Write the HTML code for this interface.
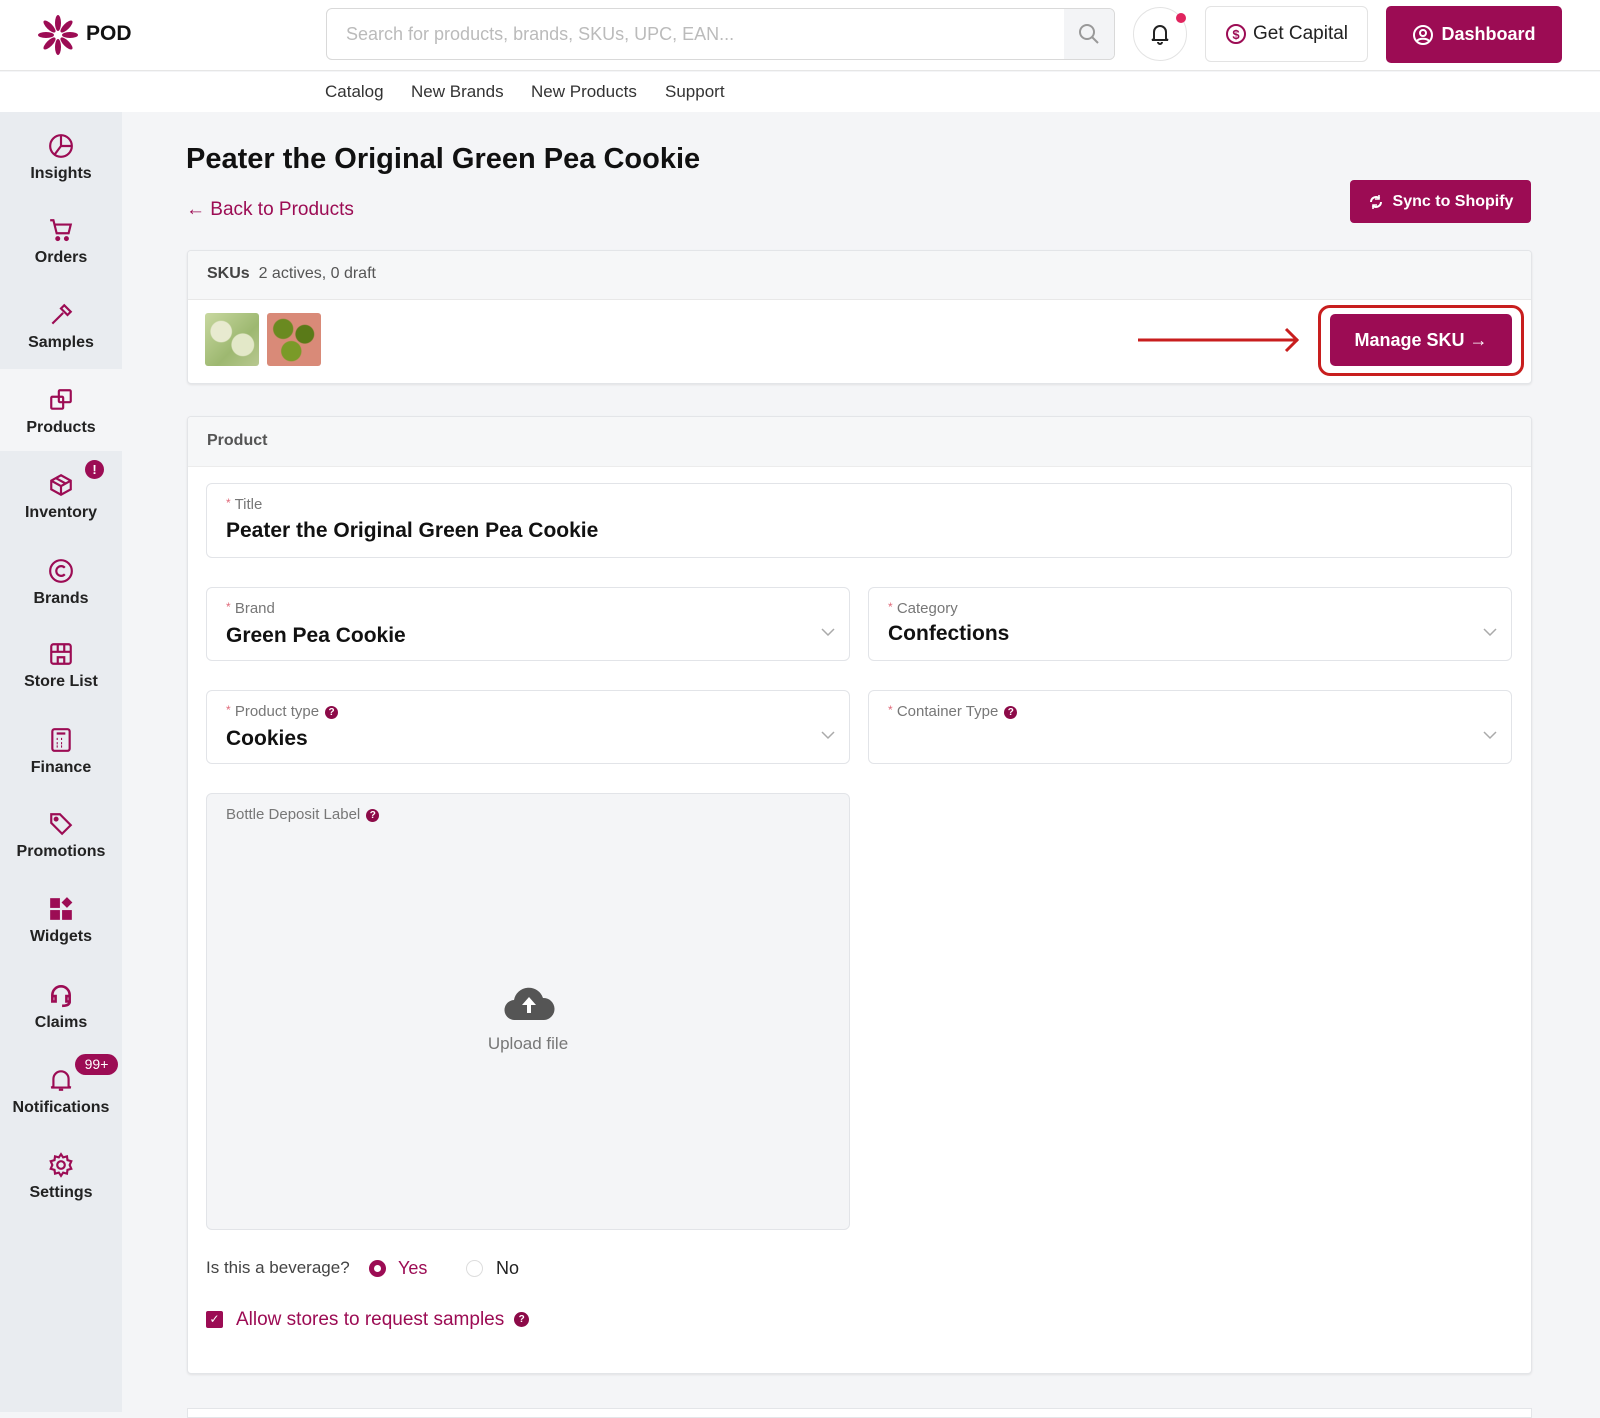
<!DOCTYPE html>
<html><head><meta charset="utf-8"><style>
*{box-sizing:border-box;margin:0;padding:0}
body{width:1600px;height:1412px;overflow:hidden;background:#f4f5f7;font-family:"Liberation Sans",sans-serif;position:relative;color:#111}
.a{position:absolute}
.hdr{left:0;top:0;width:1600px;height:71px;background:#fff;border-bottom:1px solid #e6e6e6}
.nav{left:0;top:72px;width:1600px;height:40px;background:#fff}
.nav span{position:absolute;top:10px;font-size:17px;color:#333}
.side{left:0;top:112px;width:122px;height:1300px;background:#e9ecf0}
.si{position:absolute;left:0;width:122px;text-align:center}
.si svg{display:block;margin:0 auto}
.si div{font-size:16px;font-weight:bold;color:#222;margin-top:6px}
.btn{background:#9c0c54;color:#fff;border-radius:4px;font-weight:bold;display:flex;align-items:center;justify-content:center}
.card{background:#fff;border:1px solid #e3e5e8;border-radius:4px;box-shadow:0 1px 2px rgba(0,0,0,.08)}
.fld{background:#fff;border:1px solid #e2e4e8;border-radius:6px}
.lbl{position:absolute;left:19px;top:12px;font-size:15px;color:#777}
.lbl b{color:#e06a7a;font-weight:normal;font-size:12px;vertical-align:top}
.val{position:absolute;left:19px;top:36px;font-size:21px;font-weight:bold;color:#111}
.chev{position:absolute;right:14px;top:40px}
.q{display:inline-block;width:13px;height:13px;border-radius:50%;background:#8c0a48;color:#fff;font-size:10px;text-align:center;line-height:13px;font-weight:bold;vertical-align:middle;margin-left:6px}
</style></head><body>
<div class="a hdr"></div>
<svg class="a" style="left:36px;top:13px" width="44" height="44" viewBox="0 0 44 44">
<g fill="#9c0c54" transform="translate(22,22)">
<ellipse rx="3" ry="8" cy="-12"/><ellipse rx="3" ry="8" cy="-12" transform="rotate(45)"/><ellipse rx="3" ry="8" cy="-12" transform="rotate(90)"/><ellipse rx="3" ry="8" cy="-12" transform="rotate(135)"/><ellipse rx="3" ry="8" cy="-12" transform="rotate(180)"/><ellipse rx="3" ry="8" cy="-12" transform="rotate(225)"/><ellipse rx="3" ry="8" cy="-12" transform="rotate(270)"/><ellipse rx="3" ry="8" cy="-12" transform="rotate(315)"/>
</g></svg>
<div class="a" style="left:86px;top:22px;font-size:21px;font-weight:bold;color:#111">POD</div>
<div class="a" style="left:326px;top:8px;width:789px;height:52px;border:1px solid #d9d9d9;border-radius:6px;background:#fff;overflow:hidden">
<div style="position:absolute;left:19px;top:15px;font-size:18px;color:#bbb">Search for products, brands, SKUs, UPC, EAN...</div>
<div style="position:absolute;right:0;top:0;width:50px;height:52px;background:#f3f4f6"></div>
<svg style="position:absolute;right:14px;top:14px" width="22" height="22" viewBox="0 0 22 22" fill="none" stroke="#999" stroke-width="2"><circle cx="9" cy="9" r="7"/><path d="M14 14l6 6"/></svg>
</div>
<div class="a" style="left:1133px;top:7px;width:54px;height:54px;border:1px solid #e3e3e3;border-radius:50%;background:#fff"></div>
<svg class="a" style="left:1150px;top:23px" width="20" height="22" viewBox="0 0 20 22" fill="none" stroke="#222" stroke-width="2"><path d="M4 16V9a6 6 0 0 1 12 0v7l2 1H2z"/><path d="M8 19a2 2 0 0 0 4 0"/></svg>
<div class="a" style="left:1176px;top:13px;width:10px;height:10px;border-radius:50%;background:#e0245e"></div>
<div class="a" style="left:1205px;top:6px;width:163px;height:56px;border:1px solid #e3e3e3;border-radius:6px;background:#fff;display:flex;align-items:center;justify-content:center;font-size:19px;color:#222">
<svg width="22" height="22" viewBox="0 0 22 22" style="margin-right:6px"><circle cx="11" cy="11" r="9" fill="none" stroke="#9c0c54" stroke-width="2"/><text x="11" y="16" text-anchor="middle" font-size="13" font-weight="bold" fill="#9c0c54" font-family="Liberation Sans">$</text></svg>Get Capital</div>
<div class="a btn" style="left:1386px;top:6px;width:176px;height:57px;font-size:18px;border-radius:5px">
<svg width="22" height="22" viewBox="0 0 22 22" fill="none" stroke="#fff" stroke-width="2" style="margin-right:7px"><circle cx="11" cy="11" r="9"/><circle cx="11" cy="9" r="3"/><path d="M5 17c2-3 10-3 12 0"/></svg>Dashboard</div>
<div class="a nav"><span style="left:325px">Catalog</span><span style="left:411px">New Brands</span><span style="left:531px">New Products</span><span style="left:665px">Support</span></div>

<div class="a side"></div>
<div class="a" style="left:0;top:369px;width:122px;height:82px;background:#f4f5f7"></div>
<div class="si" style="top:133px"><svg width="26" height="26" viewBox="0 0 24 24" fill="none" stroke="#9c0c54" stroke-width="2"><circle cx="12" cy="12" r="10"/><path d="M12 2v10h10M12 12l-6 8"/></svg><div>Insights</div></div>
<div class="si" style="top:217px"><svg width="26" height="26" viewBox="0 0 24 24" fill="none" stroke="#9c0c54" stroke-width="2"><path d="M2 3h3l3 12h11l2-8H6"/><circle cx="9" cy="20" r="1.3" fill="#9c0c54"/><circle cx="17" cy="20" r="1.3" fill="#9c0c54"/></svg><div>Orders</div></div>
<div class="si" style="top:302px"><svg width="26" height="26" viewBox="0 0 24 24" fill="none" stroke="#9c0c54" stroke-width="2"><path d="M4 20l10-10M12 6l6 6M15 3l6 6-3 3-6-6z"/></svg><div>Samples</div></div>
<div class="si" style="top:387px"><svg width="26" height="26" viewBox="0 0 24 24" fill="none" stroke="#9c0c54" stroke-width="2"><rect x="3" y="9" width="11" height="11" rx="1"/><rect x="10" y="3" width="11" height="11" rx="1"/></svg><div>Products</div></div>
<div class="si" style="top:472px"><svg width="26" height="26" viewBox="0 0 24 24" fill="none" stroke="#9c0c54" stroke-width="2"><path d="M12 3l9 5v8l-9 5-9-5V8zM3 8l9 5 9-5M12 13v8M7 5.5l9 5"/></svg><div>Inventory</div></div>
<div class="a" style="left:85px;top:460px;width:19px;height:19px;border-radius:50%;background:#9c0c54;color:#fff;font-size:13px;font-weight:bold;text-align:center;line-height:19px">!</div>
<div class="si" style="top:558px"><svg width="26" height="26" viewBox="0 0 24 24" fill="none" stroke="#9c0c54" stroke-width="2"><circle cx="12" cy="12" r="10"/><path d="M15.5 9a4.5 4.5 0 1 0 0 6"/></svg><div>Brands</div></div>
<div class="si" style="top:641px"><svg width="26" height="26" viewBox="0 0 24 24" fill="none" stroke="#9c0c54" stroke-width="2"><rect x="3" y="3" width="18" height="18" rx="2"/><path d="M3 10h18M9 3v7M15 3v7M9 21v-6h6v6"/></svg><div>Store List</div></div>
<div class="si" style="top:727px"><svg width="26" height="26" viewBox="0 0 24 24" fill="none" stroke="#9c0c54" stroke-width="2"><rect x="4" y="2" width="16" height="20" rx="2"/><path d="M8 6h8M8 11h1M12 11h1M8 15h1M12 15h1M8 18h1M12 18h1"/></svg><div>Finance</div></div>
<div class="si" style="top:811px"><svg width="26" height="26" viewBox="0 0 24 24" fill="none" stroke="#9c0c54" stroke-width="2"><path d="M3 3h8l10 10-8 8L3 11z"/><circle cx="7.5" cy="7.5" r="1.3" fill="#9c0c54"/></svg><div>Promotions</div></div>
<div class="si" style="top:896px"><svg width="26" height="26" viewBox="0 0 24 24" fill="#9c0c54"><rect x="2" y="2" width="9" height="9"/><rect x="2" y="13" width="9" height="9"/><rect x="13" y="13" width="9" height="9"/><path d="M17.5 1l5 5-5 5-5-5z"/></svg><div>Widgets</div></div>
<div class="si" style="top:982px"><svg width="26" height="26" viewBox="0 0 24 24" fill="none" stroke="#9c0c54" stroke-width="2.4"><path d="M4 16v-4a8 8 0 0 1 16 0v4M4 13h3v5H4zM17 13h3v5h-3zM20 18c0 3-3 4-7 4"/></svg><div>Claims</div></div>
<div class="si" style="top:1067px"><svg width="26" height="26" viewBox="0 0 24 24" fill="none" stroke="#9c0c54" stroke-width="2"><path d="M5 18V11a7 7 0 0 1 14 0v7l2 1H3z"/><path d="M10 21h4"/></svg><div>Notifications</div></div>
<div class="a" style="left:75px;top:1054px;width:43px;height:21px;border-radius:11px;background:#9c0c54;color:#fff;font-size:14px;text-align:center;line-height:21px">99+</div>
<div class="si" style="top:1152px"><svg width="26" height="26" viewBox="0 0 24 24" fill="none" stroke="#9c0c54" stroke-width="2"><circle cx="12" cy="12" r="3.5"/><path d="M12 2l2 3 3.5-1 .5 3.5 3.5 1-1.5 3.5 1.5 3.5-3.5 1-.5 3.5-3.5-1-2 3-2-3-3.5 1-.5-3.5-3.5-1L4 12 2.5 8.5 6 7.5 6.5 4 10 5z"/></svg><div>Settings</div></div>

<div class="a" style="left:186px;top:143px;font-size:29px;font-weight:bold;color:#111">Peater the Original Green Pea Cookie</div>
<div class="a" style="left:186px;top:199px;font-size:19px;color:#9c0c54">← Back to Products</div>
<div class="a btn" style="left:1350px;top:180px;width:181px;height:43px;font-size:16px">
<svg width="16" height="16" viewBox="0 0 16 16" fill="none" stroke="#fff" stroke-width="2" style="margin-right:9px"><path d="M3 8a5 5 0 0 1 8.5-3.5M13 8a5 5 0 0 1-8.5 3.5"/><path d="M11 1v4h-4M5 15v-4h4" stroke-width="1.6"/></svg>Sync to Shopify</div>

<div class="a card" style="left:187px;top:250px;width:1345px;height:134px;overflow:hidden">
<div style="height:49px;background:#f6f7f8;border-bottom:1px solid #e8e8e8;padding:14px 19px;font-size:16px;color:#555"><b style="color:#444">SKUs</b>&nbsp; 2 actives, 0 draft</div>
<div style="position:absolute;left:17px;top:62px;width:54px;height:53px;border-radius:3px;background:radial-gradient(circle at 30% 35%,#e8ead0 0 20%,transparent 22%),radial-gradient(circle at 70% 60%,#e3e8c8 0 22%,transparent 24%),linear-gradient(135deg,#c8d8a0,#9db870 60%,#b8c890)"></div>
<div style="position:absolute;left:79px;top:62px;width:54px;height:53px;border-radius:3px;background:radial-gradient(circle at 30% 30%,#6a8a20 0 18%,transparent 20%),radial-gradient(circle at 70% 40%,#5a7a18 0 18%,transparent 20%),radial-gradient(circle at 45% 72%,#7a9a28 0 20%,transparent 22%),#d98a78"></div>
</div>
<svg class="a" style="left:1136px;top:326px" width="166" height="28" viewBox="0 0 166 28" fill="none" stroke="#c81e1e" stroke-width="3"><path d="M2 14h160M150 3l11 11-11 11"/></svg>
<div class="a" style="left:1318px;top:305px;width:206px;height:71px;border:3px solid #c81e1e;border-radius:12px"></div>
<div class="a btn" style="left:1330px;top:314px;width:182px;height:52px;font-size:18px;border-radius:5px">Manage SKU →</div>

<div class="a card" style="left:187px;top:416px;width:1345px;height:958px;overflow:hidden">
<div style="height:50px;background:#f6f7f8;border-bottom:1px solid #ececec;padding:15px 19px;font-size:16px;font-weight:bold;color:#555">Product</div>
</div>
<div class="a fld" style="left:206px;top:483px;width:1306px;height:75px"><div class="lbl"><b>*</b> Title</div><div class="val" style="top:35px">Peater the Original Green Pea Cookie</div></div>
<div class="a fld" style="left:206px;top:587px;width:644px;height:74px"><div class="lbl"><b>*</b> Brand</div><div class="val">Green Pea Cookie</div><svg class="chev" width="14" height="9" viewBox="0 0 14 9" fill="none" stroke="#aaa" stroke-width="1.5"><path d="M1 1l6 6 6-6"/></svg></div>
<div class="a fld" style="left:868px;top:587px;width:644px;height:74px"><div class="lbl"><b>*</b> Category</div><div class="val" style="top:34px">Confections</div><svg class="chev" width="14" height="9" viewBox="0 0 14 9" fill="none" stroke="#aaa" stroke-width="1.5"><path d="M1 1l6 6 6-6"/></svg></div>
<div class="a fld" style="left:206px;top:690px;width:644px;height:74px"><div class="lbl"><b>*</b> Product type<span class="q">?</span></div><div class="val">Cookies</div><svg class="chev" width="14" height="9" viewBox="0 0 14 9" fill="none" stroke="#aaa" stroke-width="1.5"><path d="M1 1l6 6 6-6"/></svg></div>
<div class="a fld" style="left:868px;top:690px;width:644px;height:74px"><div class="lbl"><b>*</b> Container Type<span class="q">?</span></div><svg class="chev" width="14" height="9" viewBox="0 0 14 9" fill="none" stroke="#aaa" stroke-width="1.5"><path d="M1 1l6 6 6-6"/></svg></div>
<div class="a fld" style="left:206px;top:793px;width:644px;height:437px;background:#f4f5f7"><div class="lbl" style="top:12px">Bottle Deposit Label<span class="q">?</span></div>
<svg style="position:absolute;left:296px;top:190px" width="52" height="38" viewBox="0 0 52 38"><path d="M12 36a10 10 0 0 1-1-20 15 15 0 0 1 29-2 11 11 0 0 1 1 22z" fill="#555"/><path d="M26 13l-7 8h5v8h4v-8h5z" fill="#fff"/></svg>
<div style="position:absolute;left:0;width:100%;top:240px;text-align:center;font-size:17px;color:#777">Upload file</div></div>

<div class="a" style="left:206px;top:1258px;font-size:17px;color:#444">Is this a beverage?</div>
<div class="a" style="left:369px;top:1260px;width:17px;height:17px;border-radius:50%;background:#9c0c54"><div style="margin:5px;width:7px;height:7px;border-radius:50%;background:#fff"></div></div>
<div class="a" style="left:398px;top:1258px;font-size:18px;color:#9c0c54">Yes</div>
<div class="a" style="left:466px;top:1260px;width:17px;height:17px;border-radius:50%;border:1px solid #ddd;background:#fff"></div>
<div class="a" style="left:496px;top:1258px;font-size:18px;color:#222">No</div>
<div class="a" style="left:206px;top:1311px;width:17px;height:17px;border-radius:2px;background:#9c0c54;color:#fff;font-size:12px;text-align:center;line-height:17px">✓</div>
<div class="a" style="left:236px;top:1309px;font-size:19px;color:#9c0c54">Allow stores to request samples<span class="q" style="width:15px;height:15px;line-height:15px;margin-left:10px">?</span></div>
<div class="a" style="left:187px;top:1408px;width:1345px;height:10px;background:#fff;border:1px solid #e3e5e8"></div>
</body></html>
